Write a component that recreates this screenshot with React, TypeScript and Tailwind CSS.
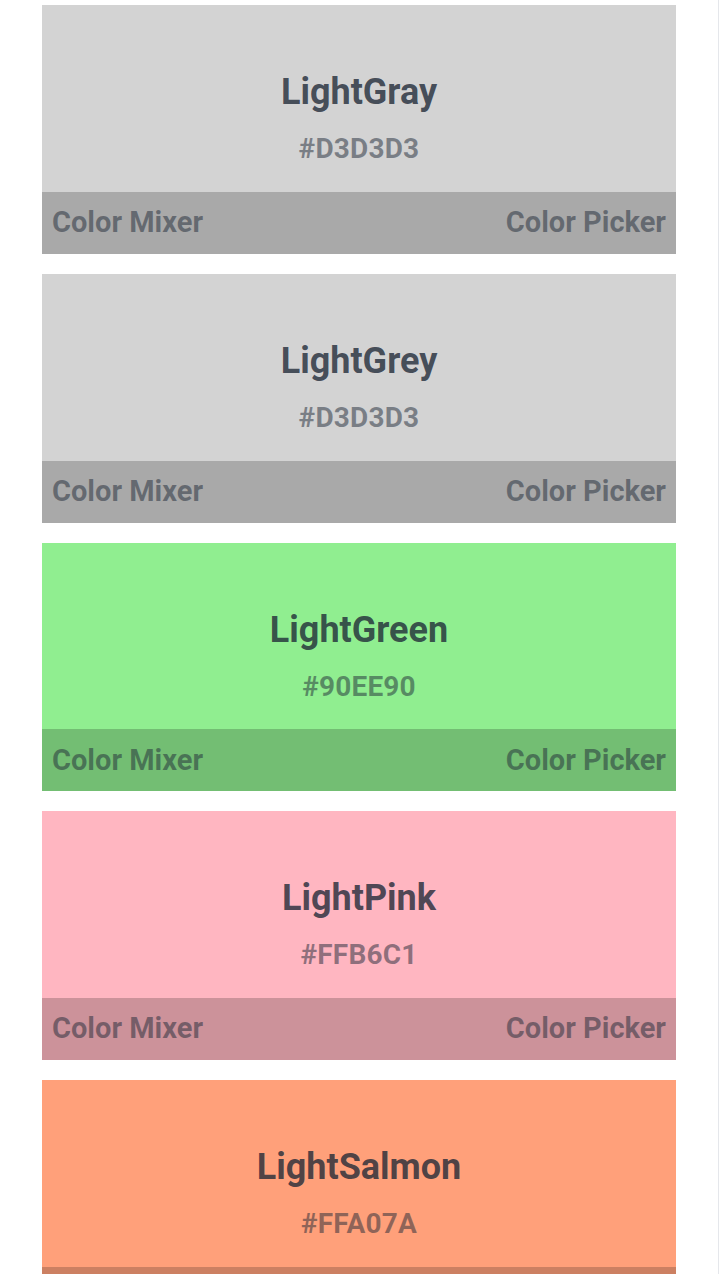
const COLORS = [
  { name: 'LightGray', hex: '#D3D3D3', bg: 'bg-[#d3d3d3]', bar: 'bg-[#a9a9a9]' },
  { name: 'LightGrey', hex: '#D3D3D3', bg: 'bg-[#d3d3d3]', bar: 'bg-[#a9a9a9]' },
  { name: 'LightGreen', hex: '#90EE90', bg: 'bg-[#90ee90]', bar: 'bg-[#73be73]' },
  { name: 'LightPink', hex: '#FFB6C1', bg: 'bg-[#ffb6c1]', bar: 'bg-[#cc929a]' },
  { name: 'LightSalmon', hex: '#FFA07A', bg: 'bg-[#ffa07a]', bar: 'bg-[#cc8062]' },
];

export default function App() {
  return (
    <div className="h-[1274px] overflow-hidden bg-white border-r border-gray-200 font-['Roboto',sans-serif]">
      <div className="flex flex-col gap-5 px-[42px] pt-[5px]">
        {COLORS.map((c) => (
          <div key={c.name} className={`${c.bg} shrink-0 flex flex-col`}>
            {/* Swatch */}
            <div className="h-[186.75px] flex flex-col items-center pt-[69px]">
              <h2 className="text-[36px] leading-none font-bold text-[#1f2937]/80">{c.name}</h2>
              <p className="mt-[25px] text-[28px] leading-none font-bold tracking-[0.2px] text-[#1f2937]/50">{c.hex}</p>
            </div>
            {/* Actions */}
            <div className={`${c.bar} h-[62px] flex items-center justify-between px-2.5 text-[29px] font-bold text-[#1f2937]/50`}>
              <span>Color Mixer</span>
              <span>Color Picker</span>
            </div>
          </div>
        ))}
      </div>
    </div>
  );
}
